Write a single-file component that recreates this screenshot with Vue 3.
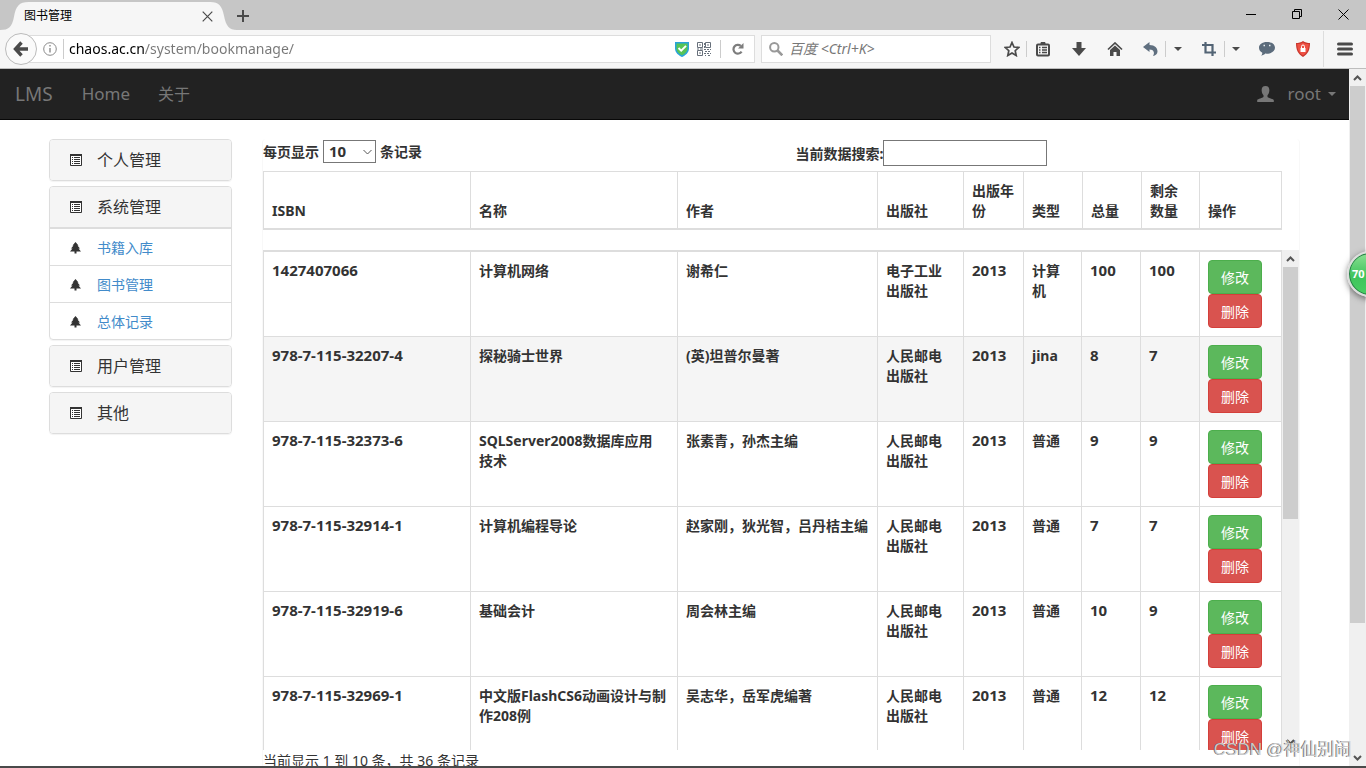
<script setup>
import { ref } from 'vue'

const address = ref('chaos.ac.cn/system/bookmanage/')
const pageSize = ref('10')
const keyword = ref('')

const menus = [
  { title: '个人管理', items: [] },
  { title: '系统管理', items: ['书籍入库', '图书管理', '总体记录'] },
  { title: '用户管理', items: [] },
  { title: '其他', items: [] }
]
const headers = ['ISBN', '名称', '作者', '出版社', '出版年份', '类型', '总量', '剩余数量', '操作']
// The word joiner keeps 技术 together when the title wraps.
const books = [
  ['1427407066', '计算机网络', '谢希仁', '电子工业出版社', '2013', '计算机', '100', '100'],
  ['978-7-115-32207-4', '探秘骑士世界', '(英)坦普尔曼著', '人民邮电出版社', '2013', 'jina', '8', '7'],
  ['978-7-115-32373-6', 'SQLServer2008数据库应用技\u2060术', '张素青，孙杰主编', '人民邮电出版社', '2013', '普通', '9', '9'],
  ['978-7-115-32914-1', '计算机编程导论', '赵家刚，狄光智，吕丹桔主编', '人民邮电出版社', '2013', '普通', '7', '7'],
  ['978-7-115-32919-6', '基础会计', '周会林主编', '人民邮电出版社', '2013', '普通', '10', '9'],
  ['978-7-115-32969-1', '中文版FlashCS6动画设计与制作208例', '吴志华，岳军虎编著', '人民邮电出版社', '2013', '普通', '12', '12']
]
const isNumeric = (text) => /^[\d-]+$/.test(text)
</script>

<template>
  <div class="browser">
    <div class="tabstrip">
      <div class="tab">
        <svg class="tab-shape" viewBox="0 0 238 28" preserveAspectRatio="none"><path d="M0 28C9 28 12 25 14 15C16 4 19 0 29 0H211C220 0 223 4 225 14C227 24 230 28 238 28Z" fill="#f6f6f6" /></svg>
        <span class="tab-title">图书管理</span>
        <button class="tab-close" aria-label="关闭标签页"><svg width="11" height="11" viewBox="0 0 11 11"><path d="M.7.7l9.6 9.6M10.3.7L.7 10.3" stroke="#4a4a4a" stroke-width="1.2" /></svg></button>
      </div>
      <button class="tab-new" aria-label="新建标签页"><svg width="12" height="12" viewBox="0 0 12 12"><path d="M6 0v12M0 6h12" stroke="#4a4a4a" stroke-width="2" /></svg></button>
      <div class="window-buttons">
        <button aria-label="最小化"><svg width="11" height="11" viewBox="0 0 11 11"><path d="M0 5.5h10" stroke="#000" /></svg></button>
        <button aria-label="还原"><svg width="11" height="11" viewBox="0 0 11 11"><path d="M.5 2.5h7v7h-7zM2.500 2.500v-2h7v7h-2" fill="none" stroke="#000" /></svg></button>
        <button aria-label="关闭"><svg width="11" height="11" viewBox="0 0 11 11"><path d="M.5.5l10 10M10.500.5l-10 10" stroke="#000" /></svg></button>
      </div>
    </div>

    <div class="toolbar">
      <button class="back" aria-label="后退"><svg width="16" height="16" viewBox="0 0 16 16"><path d="M8.500 1.500L2.500 8l6 6.500M3 8h12" fill="none" stroke="#4a4a4a" stroke-width="3.400" /></svg></button>
      <div class="urlbar">
        <svg class="info" width="14" height="14" viewBox="0 0 14 14"><circle cx="7" cy="7" r="6.300" fill="none" stroke="#8a8a8a" /><path d="M7 6v4.500M7 3v1.600" stroke="#8a8a8a" stroke-width="1.400" /></svg>
        <input v-model="address" class="address" aria-label="地址" />
        <svg width="14" height="16" viewBox="0 0 14 16"><path d="M0 1h14v6.500C14 12 10 14.500 7 16C4 14.500 0 12 0 7.500Z" fill="#29a3da" /><path d="M1.500 2.500h11V7.500C12.500 11 9.500 13 7 14.200C4.500 13 1.500 11 1.500 7.500Z" fill="#56c456" /><path d="M3.500 7l2.700 2.600L11 4.900" fill="none" stroke="#fff" stroke-width="2" /></svg>
        <svg class="qr" width="14" height="14" viewBox="0 0 14 14" fill="none" stroke="#666f7a"><path d="M.5.5h5v5h-5zM8.500.5h5v5h-5zM.5 8.500h5v5h-5z" /><path d="M2 3h2M10 3h2M2 11h2M7.500 1v2M7.500 4v2M0 7h2M3 7h3M7 7.500h2M10 7.500h2M13 7.500h1M8 9.500h2M11 9.500h2M7 11.500h2M10 11.500h2M13 11.500h1M8 13.500h1M11 13.500h2" /></svg>
        <i class="rule"></i>
        <button class="reload" aria-label="刷新"><svg width="12" height="12" viewBox="0 0 12 12"><path d="M9.600 8.600A4.400 4.400 0 1 1 8.800 2.900" fill="none" stroke="#7d7d7d" stroke-width="2.200" /><path d="M11.500 0v5.500H6Z" fill="#7d7d7d" /></svg></button>
      </div>
      <div class="searchbar">
        <svg width="14" height="14" viewBox="0 0 14 14" fill="none" stroke="#999"><circle cx="5.300" cy="5.300" r="4.200" stroke-width="2" /><path d="M8.500 8.500l4.800 4.800" stroke-width="2.600" /></svg>
        <input placeholder="百度 <Ctrl+K>" aria-label="搜索" />
      </div>
      <div class="tools">
        <button class="t-star" aria-label="收藏"><svg width="16" height="16" viewBox="0 0 16 16"><path d="M8 1.500l2 4.500 4.700.5-3.500 3.200 1 4.800L8 12l-4.200 2.500 1-4.800L1.300 6.500 6 6Z" fill="none" stroke="#4a4a4a" stroke-width="1.700" /></svg></button>
        <button class="t-list" aria-label="书签"><svg width="14" height="16" viewBox="0 0 14 16"><path d="M5 3V1.500h4V3" fill="#4a4a4a" stroke="#4a4a4a" /><rect x="1" y="3.500" width="12" height="11" rx="1" fill="none" stroke="#4a4a4a" stroke-width="2" /><path d="M3 6.500h1.500M6 6.500h5M3 9h1.500M6 9h5M3 11.500h1.500M6 11.500h5" stroke="#4a4a4a" stroke-width="1.300" /></svg></button>
        <button class="t-down" aria-label="下载"><svg width="14" height="14" viewBox="0 0 14 14"><path d="M4.500 0h5v6H14l-7 8-7-8h4.500Z" fill="#4a4a4a" /></svg></button>
        <button class="t-home" aria-label="主页"><svg width="16" height="14" viewBox="0 0 16 14"><path d="M1 7.500L8 1l7 6.500" fill="none" stroke="#4a4a4a" stroke-width="1.700" /><path d="M3 8l5-4.600L13 8v6H9.500v-4h-3v4H3Z" fill="#4a4a4a" /></svg></button>
        <button class="t-undo" aria-label="撤销"><svg width="15" height="14" viewBox="0 0 15 14"><path d="M0 5L6.500 0v3C12 3 14.500 6 14.500 9.500C14.500 12 12.500 13.500 10 14C12 11 11 7.500 6.500 7.500V10Z" fill="#5f6f7f" /></svg></button>
        <button class="t-caret-a" aria-label="撤销选项"><svg width="8" height="4" viewBox="0 0 8 4"><path d="M0 0h8L4 4Z" fill="#4a4a4a" /></svg></button>
        <button class="t-crop" aria-label="截图"><svg width="14" height="14" viewBox="0 0 14 14"><path d="M0 3h10.500v8M3.500 0v10.500H14M10.500 9v5" fill="none" stroke="#536475" stroke-width="2.200" /></svg></button>
        <button class="t-caret-b" aria-label="截图选项"><svg width="8" height="4" viewBox="0 0 8 4"><path d="M0 0h8L4 4Z" fill="#4a4a4a" /></svg></button>
        <button class="t-chat" aria-label="消息"><svg width="16" height="14" viewBox="0 0 16 14"><path d="M8 0C3 0 0 2.500 0 5.800C0 8 1.200 9.800 3.300 10.800C3.400 12 2.800 13 2 13.800C4 13.500 5.500 12.500 6.300 11.600C12 12 16 9.500 16 5.800C16 2.500 13 0 8 0Z" fill="#5c6c7c" /><path d="M4.500 3.500h1.500M10 3.500h1.500" stroke="#e8edf0" stroke-width="1.500" /></svg></button>
        <button class="t-shield" aria-label="安全"><svg width="14" height="16" viewBox="0 0 14 16"><path d="M7 0C9 1.500 11.500 2 14 2C14 9 12 13 7 16C2 13 0 9 0 2C2.500 2 5 1.500 7 0Z" fill="#c9352b" /><path d="M7 1.500C9 2.700 11 3 12.800 3C12.700 8.500 11 12 7 14.500C3 12 1.300 8.500 1.200 3C3 3 5 2.700 7 1.500Z" fill="#ee5144" /><path d="M4.500 7h5v4h-5z" fill="#fff" /><path d="M5.500 7V5.500a1.500 1.500 0 0 1 3 0V7" fill="none" stroke="#fff" /></svg></button>
        <button class="t-menu" aria-label="菜单"><svg width="16" height="14" viewBox="0 0 16 14"><path d="M1.500 2h13M1.500 7h13M1.500 12h13" stroke="#4a4a4a" stroke-width="3" stroke-linecap="round" /></svg></button>
      </div>
    </div>

    <div class="viewport">
      <div class="page">
        <nav class="navbar">
          <a href="#" class="brand">LMS</a>
          <a href="#" class="home">Home</a>
          <a href="#" class="about">关于</a>
          <a href="#" class="user">
            <svg width="17" height="16" viewBox="0 0 17 16"><path d="M8.500 0C11.500 0 12.600 2 12.300 5C12.100 7.300 11.200 8.500 10.500 9.300V11C11.500 12 16 12.800 16.800 14V16H.2V14C1 12.800 5.500 12 6.500 11V9.300C5.800 8.500 4.900 7.300 4.700 5C4.400 2 5.500 0 8.500 0Z" fill="#777" /></svg>
            <span>root</span>
            <svg class="caret" width="8" height="4" viewBox="0 0 8 4"><path d="M0 0h8L4 4Z" fill="#777" /></svg>
          </a>
        </nav>

        <div class="content">
          <aside class="sidebar">
            <section v-for="menu in menus" :key="menu.title" class="panel">
              <h4 class="panel-title">
                <svg width="12" height="12" viewBox="0 0 12 12"><path d="M.5.5h11v11H.5z" fill="#fff" stroke="#333" /><path d="M0 1h12" stroke="#333" stroke-width="2" /><path d="M2 3.500h1M4 3.500h6M2 5.500h1M4 5.500h6M2 7.500h1M4 7.500h6M2 9.500h1M4 9.500h6" stroke="#333" /></svg>
                <span>{{ menu.title }}</span>
              </h4>
              <ul v-if="menu.items.length" class="panel-list">
                <li v-for="item in menu.items" :key="item">
                  <svg width="12" height="12" viewBox="0 0 12 12"><path d="M5.500 0L8.500 3.500H7.500L10 6.500H8.500L11 9.500H6.500V11.500H4.500V9.500H0L2.500 6.500H1L3.500 3.500H2.500Z" fill="#333" /></svg>
                  <a href="#">{{ item }}</a>
                </li>
              </ul>
            </section>
          </aside>

          <main class="main">
            <div class="filters">
              <div class="length">
                <label for="page-size">每页显示</label>
                <span class="select">
                  <select id="page-size" v-model="pageSize"><option>10</option><option>25</option><option>50</option></select>
                  <svg width="9" height="6" viewBox="0 0 9 6"><path d="M.5 1l4 4 4-4" fill="none" stroke="#555" /></svg>
                </span>
                <span>条记录</span>
              </div>
              <div class="search">
                <label for="keyword">当前数据搜索:</label><input id="keyword" v-model="keyword" />
              </div>
            </div>

            <table class="grid head">
              <colgroup><col v-for="n in 9" :key="n" :class="'c' + n" /></colgroup>
              <thead><tr><th v-for="title in headers" :key="title">{{ title }}</th></tr></thead>
            </table>

            <div class="scroller">
              <div class="rows">
                <table class="grid body">
                  <colgroup><col v-for="n in 9" :key="n" :class="'c' + n" /></colgroup>
                  <tbody>
                    <tr v-for="(book, r) in books" :key="r" :class="{ active: r === 1 }">
                      <td v-for="(cell, c) in book" :key="c" :class="{ num: isNumeric(cell) }">{{ cell }}</td>
                      <td class="ops"><button class="btn edit">修改</button><button class="btn remove">删除</button></td>
                    </tr>
                  </tbody>
                </table>
              </div>
              <div class="scrollbar">
                <svg class="arrow" width="9" height="6" viewBox="0 0 9 6"><path d="M1 5l3.500-3.500L8 5" fill="none" stroke="#555" stroke-width="2" /></svg>
                <div class="track"><div class="thumb inner"></div></div>
                <svg class="arrow" width="9" height="6" viewBox="0 0 9 6"><path d="M1 1l3.500 3.500L8 1" fill="none" stroke="#555" stroke-width="2" /></svg>
              </div>
            </div>
            <p class="summary">当前显示 1 到 10 条，共 36 条记录</p>
          </main>
        </div>
      </div>
      <div class="scrollbar">
        <svg class="arrow" width="9" height="6" viewBox="0 0 9 6"><path d="M1 5l3.500-3.500L8 5" fill="none" stroke="#555" stroke-width="2" /></svg>
        <div class="track"><div class="thumb outer"></div></div>
        <svg class="arrow" width="9" height="6" viewBox="0 0 9 6"><path d="M1 1l3.500 3.500L8 1" fill="none" stroke="#555" stroke-width="2" /></svg>
      </div>
    </div>
    <div class="taskbar-edge"></div>

    <div class="badge">70</div>
    <div class="watermark">CSDN @神仙别闹</div>
  </div>
</template>

<style>
body { overflow: hidden; }
</style>

<style scoped>
* { box-sizing: border-box; }
.browser {
  position: relative;
  display: flex;
  flex-direction: column;
  height: 100vh;
  overflow: hidden;
  background: #fff;
  color: #333;
  font-family: "Noto Sans", "Noto Sans CJK SC", sans-serif;
  font-size: 14px;
  line-height: 20px;
}
button, input, select { font: inherit; color: inherit; margin: 0; padding: 0; border: 0; background: none; outline: 0; }
button { display: flex; align-items: center; justify-content: center; }
svg { flex: none; display: block; }
a { color: inherit; text-decoration: none; }

.tabstrip { display: flex; flex: none; height: 30px; background: #c6c6c6; }
.tab { position: relative; display: flex; align-items: center; width: 237px; margin-top: 2px; padding: 0 24px; }
.tab-shape { position: absolute; inset: 0; width: 100%; height: 100%; }
.tab-title { position: relative; flex: 1; color: #000; font-size: 12px; }
.tab-close { position: relative; }
.tab-new { margin-top: 2px; width: 12px; }
.window-buttons { display: flex; margin-left: auto; height: 28px; }
.window-buttons button { width: 46px; }

.toolbar { display: flex; flex: none; align-items: center; height: 39px; background: #f6f6f6; border-bottom: 1px solid #bdbdbd; }
.back { position: relative; z-index: 1; width: 32px; height: 32px; margin-left: 5px; border: 1px solid #bbb; border-radius: 50%; background: #fafafa; }
.urlbar, .searchbar { display: flex; align-items: center; height: 28px; background: #fff; border: 1px solid #ddd; }
.urlbar { flex: 1; margin-left: -14px; padding-left: 19px; }
.address {
  flex: 1;
  min-width: 0;
  height: 20px;
  margin-left: 6px;
  padding-left: 5px;
  border-left: 1px solid #ccc;
  font-size: 14px;
  color: transparent;
  background: linear-gradient(90deg, #000 80px, #777 80px);
  background-clip: text;
}
.qr { margin-left: 8px; }
.rule { width: 1px; height: 18px; margin-left: 9px; background: #ccc; }
.reload { width: 33px; height: 26px; }
.searchbar { width: 230px; margin-left: 6px; padding-left: 7px; gap: 6px; }
.searchbar input { flex: 1; min-width: 0; font-style: italic; }
.searchbar input::placeholder { color: #777; opacity: 1; }
.tools { display: flex; align-items: center; margin-left: 6px; }
.tools button { height: 16px; }
.tools .t-star { width: 30px; border-right: 1px solid #ccc; }
.tools .t-list, .tools .t-home { width: 32px; }
.tools .t-down { width: 40px; }
.tools .t-undo, .tools .t-crop { width: 35px; padding-left: 4px; border-right: 1px solid #ccc; }
.tools .t-caret-a { width: 24px; }
.tools .t-caret-b { width: 21px; }
.tools .t-chat { width: 42px; }
.tools .t-shield { width: 30px; }
.tools .t-menu { width: 43px; height: 36px; margin-left: 5px; border-left: 1px solid #ddd; }

.viewport { display: flex; flex: 1; min-height: 0; }
.page { flex: 1; min-width: 0; overflow: hidden; }
.navbar { display: flex; align-items: center; height: 51px; padding: 0 13px 0 15px; background: #222; border-bottom: 1px solid #080808; color: #777; font-size: 17px; }
.brand { font-size: 19px; }
.home { margin-left: 29px; }
.about { margin-left: 28px; font-size: 16px; }
.user { display: flex; align-items: center; margin-left: auto; }
.user span { margin-left: 14px; }
.caret { margin-left: 7px; }

.content { display: flex; align-items: flex-start; gap: 30px; padding: 19px 49px 0 49px; }
.sidebar { flex: none; width: 183px; display: flex; flex-direction: column; gap: 5px; }
.panel { border: 1px solid #ddd; border-radius: 4px; box-shadow: 0 1px 1px rgba(0, 0, 0, .05); overflow: hidden; }
.panel-title { display: flex; align-items: center; height: 40px; margin: 0; padding-left: 20px; gap: 15px; background: #f5f5f5; font-size: 16px; font-weight: 400; }
.panel-list { margin: 0; padding: 0; list-style: none; border-top: 2px solid #ddd; }
.panel-list li { display: flex; align-items: center; height: 37px; padding: 2px 0 0 20px; gap: 15px; border-bottom: 1px solid #ddd; }
.panel-list li:last-child { height: 36px; border-bottom: 0; }
.panel-list a { color: #428bca; }

.main { flex: 1; min-width: 0; border: solid #f8f8f8; border-width: 0 1px; border-radius: 4px; }
.filters { display: flex; padding: 1px 0 5px; font-weight: 700; }
.length { display: flex; align-items: flex-start; gap: 4px; width: 51.4%; height: 26px; line-height: 24px; }
.select { position: relative; display: block; width: 53px; height: 23px; }
.select select { display: block; width: 100%; height: 100%; padding: 0 0 2px 5px; appearance: none; border: 1px solid #777; background: #fff; font-size: 15px; line-height: 20px; font-weight: 700; }
.select svg { position: absolute; right: 4px; top: 9px; pointer-events: none; }
.search { display: flex; line-height: 28px; height: 26px; }
.search input { width: 164px; height: 26px; padding: 0 4px; border: 1px solid #777; background: #fff; }

.grid { width: calc(100% - 18px); table-layout: fixed; border-collapse: collapse; font-weight: 700; }
.grid th, .grid td { padding: 9px 8px 7px; border: 1px solid #ddd; text-align: left; overflow-wrap: break-word; }
.grid th { vertical-align: bottom; border-bottom-width: 2px; }
.grid td { vertical-align: top; }
.grid .num { padding-top: 8px; font-size: 15px; }
.grid .ops { padding: 8px; }
.head { margin-bottom: 20px; }
.c1, .c2 { width: 207px; }
.c3 { width: 200px; }
.c4 { width: 86px; }
.c5 { width: 60px; }
.c6, .c7 { width: 59px; }
.c8 { width: 58px; }
.c9 { width: 82px; }
.scroller { display: flex; height: 500px; }
.rows { flex: 1; min-width: 0; overflow: hidden; }
.body { width: calc(100% - 1px); }
.body .c6 { width: 58px; }
.body .c8 { width: 59px; }
.body tr:first-child td { border-top-width: 2px; }
.body .active { background: #f5f5f5; }
.btn { width: 54px; height: 34px; padding-top: 1px; border: 1px solid; border-radius: 4px; color: #fff; font-weight: 400; }
.edit { background: #5cb85c; border-color: #4cae4c; }
.remove { background: #d9534f; border-color: #d43f3a; }
.summary { margin: 0; line-height: 22px; }

.scrollbar { flex: none; display: flex; flex-direction: column; width: 17px; padding: 0 1px; background: #f0f0f0; }
.arrow { margin: 6px auto 5px; }
.track { flex: 1; }
.thumb { background: #cdcdcd; }
.inner { height: 54%; }
.outer { height: 81%; }
.taskbar-edge { flex: none; height: 2px; background: #4a4a4a; }

.badge { position: absolute; right: -27px; top: 251px; width: 46px; height: 46px; padding-left: 3px; border: 2px solid #ddd; border-radius: 50%; background: linear-gradient(#8ce094, #3fc45c 55%, #49cf63); box-shadow: inset 0 0 0 1px #267a45, 0 2px 6px rgba(0, 0, 0, .5); color: #fff; font-size: 11px; font-weight: 700; line-height: 41px; }
.watermark { position: absolute; right: 14px; bottom: 7px; color: rgba(215, 215, 215, .9); font-size: 17px; line-height: 22px; text-shadow: -1px 0 0 rgba(80, 80, 80, .8); font-family: "Liberation Sans", "Noto Sans CJK SC", sans-serif; }
</style>
